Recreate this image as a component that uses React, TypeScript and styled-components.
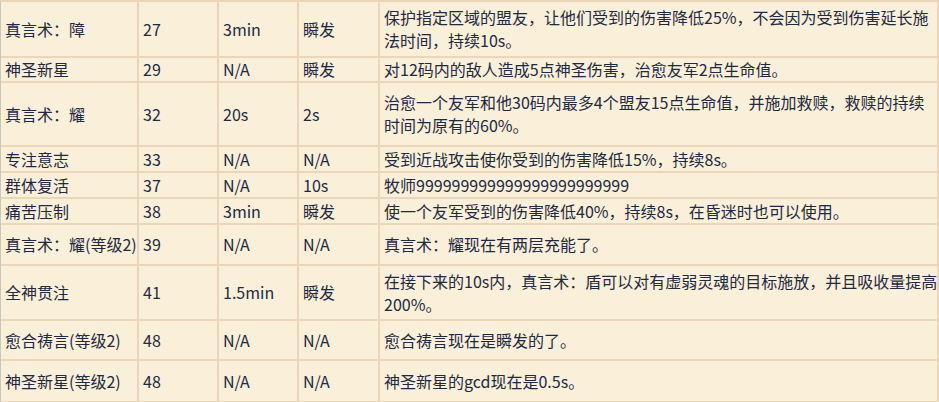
import React from "react";
import styled, { createGlobalStyle } from "styled-components";

const Global = createGlobalStyle`
  html, body { margin: 0; padding: 0; background: #faefd8; overflow: hidden; }
  #root { width: 939px; height: 402px; overflow: hidden; }
`;

const Page = styled.div`
  width: 939px;
  height: 402px;
  overflow: hidden;
  background: #faefd8;
`;

const Table = styled.table`
  border-collapse: separate;
  border-spacing: 0;
  table-layout: fixed;
  width: 939px;
  border-left: 1px solid #c9c6c0;
  border-top: 2px solid #ecd6ba;
  background: #faefd8;
  font-family: "Microsoft YaHei", "Noto Sans CJK SC", "Noto Sans", sans-serif;
  font-size: 16px;
  line-height: 23px;
  color: #1c2a44;
`;

const Row = styled.tr<{ $h: number }>`
  height: ${(p) => p.$h}px;
`;

const Cell = styled.td<{ $w: number }>`
  width: ${(p) => p.$w}px;
  box-sizing: border-box;
  padding: 0 4px;
  border-right: 2px solid #ecd6ba;
  border-bottom: 2px solid #ecd6ba;
  vertical-align: middle;
  white-space: nowrap;
  overflow: hidden;
`;

const widths = [138, 80, 80, 81, 559];

type Item = { h: number; cells: React.ReactNode[] };

const rows: Item[] = [
  {
    h: 56,
    cells: [
      "真言术：障",
      "27",
      "3min",
      "瞬发",
      <>保护指定区域的盟友，让他们受到的伤害降低25%，不会因为受到伤害延长施<br />法时间，持续10s。</>,
    ],
  },
  { h: 25, cells: ["神圣新星", "29", "N/A", "瞬发", "对12码内的敌人造成5点神圣伤害，治愈友军2点生命值。"] },
  {
    h: 64,
    cells: [
      "真言术：耀",
      "32",
      "20s",
      "2s",
      <>治愈一个友军和他30码内最多4个盟友15点生命值，并施加救赎，救赎的持续<br />时间为原有的60%。</>,
    ],
  },
  { h: 26, cells: ["专注意志", "33", "N/A", "N/A", "受到近战攻击使你受到的伤害降低15%，持续8s。"] },
  { h: 26, cells: ["群体复活", "37", "N/A", "10s", "牧师999999999999999999999999"] },
  { h: 26, cells: ["痛苦压制", "38", "3min", "瞬发", "使一个友军受到的伤害降低40%，持续8s，在昏迷时也可以使用。"] },
  { h: 41, cells: ["真言术：耀(等级2)", "39", "N/A", "N/A", "真言术：耀现在有两层充能了。"] },
  {
    h: 55,
    cells: [
      "全神贯注",
      "41",
      "1.5min",
      "瞬发",
      <>在接下来的10s内，真言术：盾可以对有虚弱灵魂的目标施放，并且吸收量提高<br />200%。</>,
    ],
  },
  { h: 40, cells: ["愈合祷言(等级2)", "48", "N/A", "N/A", "愈合祷言现在是瞬发的了。"] },
  { h: 42, cells: ["神圣新星(等级2)", "48", "N/A", "N/A", "神圣新星的gcd现在是0.5s。"] },
];

export default function App() {
  return (
    <Page>
      <Global />
      <Table>
        <tbody>
          {rows.map((r, i) => (
            <Row key={i} $h={r.h}>
              {r.cells.map((c, j) => (
                <Cell key={j} $w={widths[j]}>
                  {c}
                </Cell>
              ))}
            </Row>
          ))}
        </tbody>
      </Table>
    </Page>
  );
}
